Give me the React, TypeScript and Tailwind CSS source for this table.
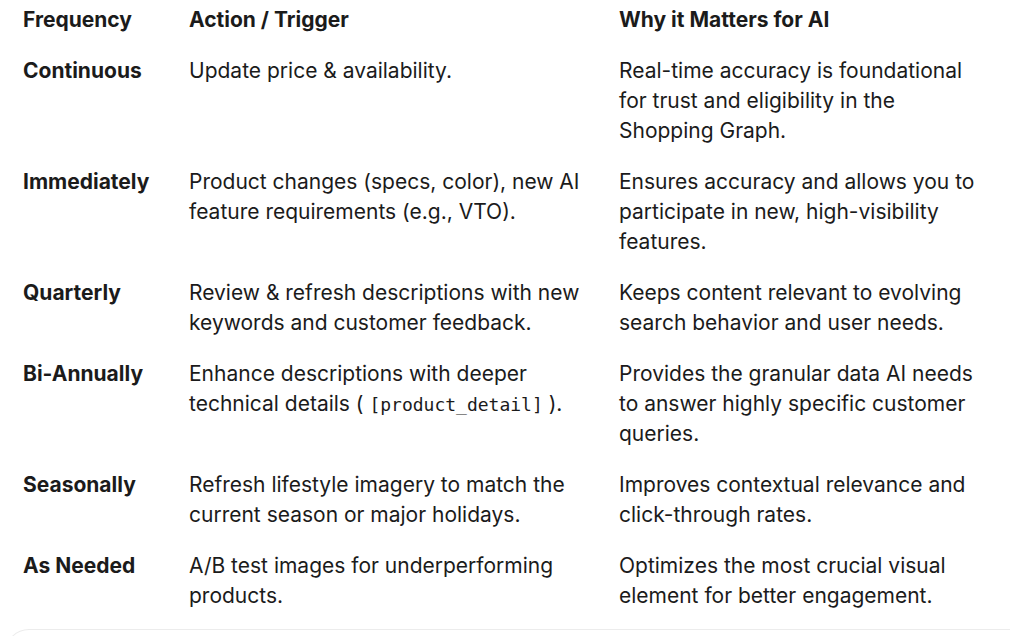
import React from 'react';

type Row = {
  freq: string;
  action: React.ReactNode;
  why: string;
};

const rows: Row[] = [
  {
    freq: 'Continuous',
    action: 'Update price & availability.',
    why: 'Real-time accuracy is foundational for trust and eligibility in the Shopping Graph.',
  },
  {
    freq: 'Immediately',
    action: 'Product changes (specs, color), new AI feature requirements (e.g., VTO).',
    why: 'Ensures accuracy and allows you to participate in new, high-visibility features.',
  },
  {
    freq: 'Quarterly',
    action: 'Review & refresh descriptions with new keywords and customer feedback.',
    why: 'Keeps content relevant to evolving search behavior and user needs.',
  },
  {
    freq: 'Bi-Annually',
    action: (
      <>
        Enhance descriptions with deeper technical details ({' '}
        <code className="font-['DejaVu_Sans_Mono',monospace] text-[18px] leading-none">[product_detail]</code> ).
      </>
    ),
    why: 'Provides the granular data AI needs to answer highly specific customer queries.',
  },
  {
    freq: 'Seasonally',
    action: 'Refresh lifestyle imagery to match the current season or major holidays.',
    why: 'Improves contextual relevance and click-through rates.',
  },
  {
    freq: 'As Needed',
    action: 'A/B test images for underperforming products.',
    why: 'Optimizes the most crucial visual element for better engagement.',
  },
];

const cell = 'pt-[10px] pb-[11px]';

export default function App() {
  return (
    <div className="h-[636px] overflow-hidden bg-white font-['Inter',sans-serif] text-[21px] leading-[30px] text-[#1b1b1b]">
      <div className="-mt-[5px] grid grid-cols-[166px_430px_1fr] pl-[23px]">
        <div className={`${cell} font-bold`}>Frequency</div>
        <div className={`${cell} font-bold`}>Action / Trigger</div>
        <div className={`${cell} font-bold pr-[25px]`}>Why it Matters for AI</div>
        {rows.map((r) => (
          <React.Fragment key={r.freq}>
            <div className={`${cell} font-bold`}>{r.freq}</div>
            <div className={`${cell} pr-[24px]`}>{r.action}</div>
            <div className={`${cell} pr-[25px]`}>{r.why}</div>
          </React.Fragment>
        ))}
      </div>
      <div className="mt-[7px] ml-[5px] h-[40px] rounded-tl-[24px] border-t border-l border-[#ececec]" />
    </div>
  );
}
